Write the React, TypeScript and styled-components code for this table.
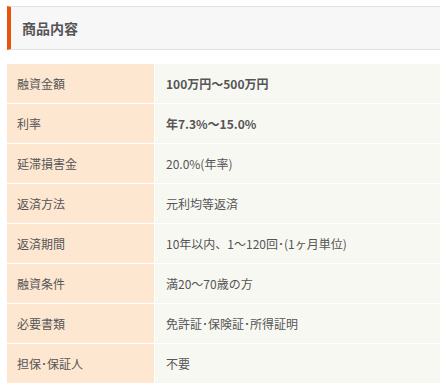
import styled, { createGlobalStyle } from 'styled-components';

const GlobalStyle = createGlobalStyle`
    html, body {
        margin: 0;
        padding: 0;
        background: #ffffff;
    }

    body {
        font-family: 'Noto Sans CJK JP', 'Noto Sans', sans-serif;
        color: #555555;
    }
`;

interface SpecRow {
    label: string;
    value: string;
    strong?: boolean;
}

const rows: SpecRow[] = [
    { label: '融資金額', value: '100万円〜500万円', strong: true },
    { label: '利率', value: '年7.3%〜15.0%', strong: true },
    { label: '延滞損害金', value: '20.0%(年率)' },
    { label: '返済方法', value: '元利均等返済' },
    { label: '返済期間', value: '10年以内、1〜120回･(1ヶ月単位)' },
    { label: '融資条件', value: '満20〜70歳の方' },
    { label: '必要書類', value: '免許証･保険証･所得証明' },
    { label: '担保･保証人', value: '不要' },
];

export default function App() {
    return (
        <>
            <GlobalStyle />
            <Section>
                <Heading>商品内容</Heading>
                <SpecTable>
                    {rows.map((row) => (
                        <Row key={row.label}>
                            <Label>{row.label}</Label>
                            <Value $strong={row.strong}>{row.value}</Value>
                        </Row>
                    ))}
                </SpecTable>
            </Section>
        </>
    );
}

const Section = styled.section`
    display: flex;
    flex-direction: column;
    gap: 14px;

    padding: 6px 0 0 7px;
`;

const Heading = styled.h2`
    display: flex;
    align-items: center;

    height: 42px;
    margin: 0;
    padding: 0 0 0 11px;

    font-size: 14px;
    font-weight: bold;
    color: #555555;

    border-top: 1px solid #e2e2e2;
    border-bottom: 1px solid #e2e2e2;
    border-left: 4px solid #e8540c;
    background: #f7f7f7;
`;

const SpecTable = styled.div`
    display: flex;
    flex-direction: column;
    gap: 1px;

    background: #ffffff;
`;

const Row = styled.div`
    display: grid;
    grid-template-columns: 147px 1fr;
    gap: 1px;

    height: 39px;
`;

const Label = styled.div`
    display: flex;
    align-items: center;

    padding-left: 10px;

    font-size: 12px;
    color: #555555;

    background: #fee7d1;
`;

const Value = styled.div<{ $strong?: boolean }>`
    display: flex;
    align-items: center;

    padding-left: 11px;

    font-size: 12px;
    font-weight: ${({ $strong }) => ($strong ? 'bold' : 'normal')};
    color: #555555;

    background: #f8f8f3;
`;
